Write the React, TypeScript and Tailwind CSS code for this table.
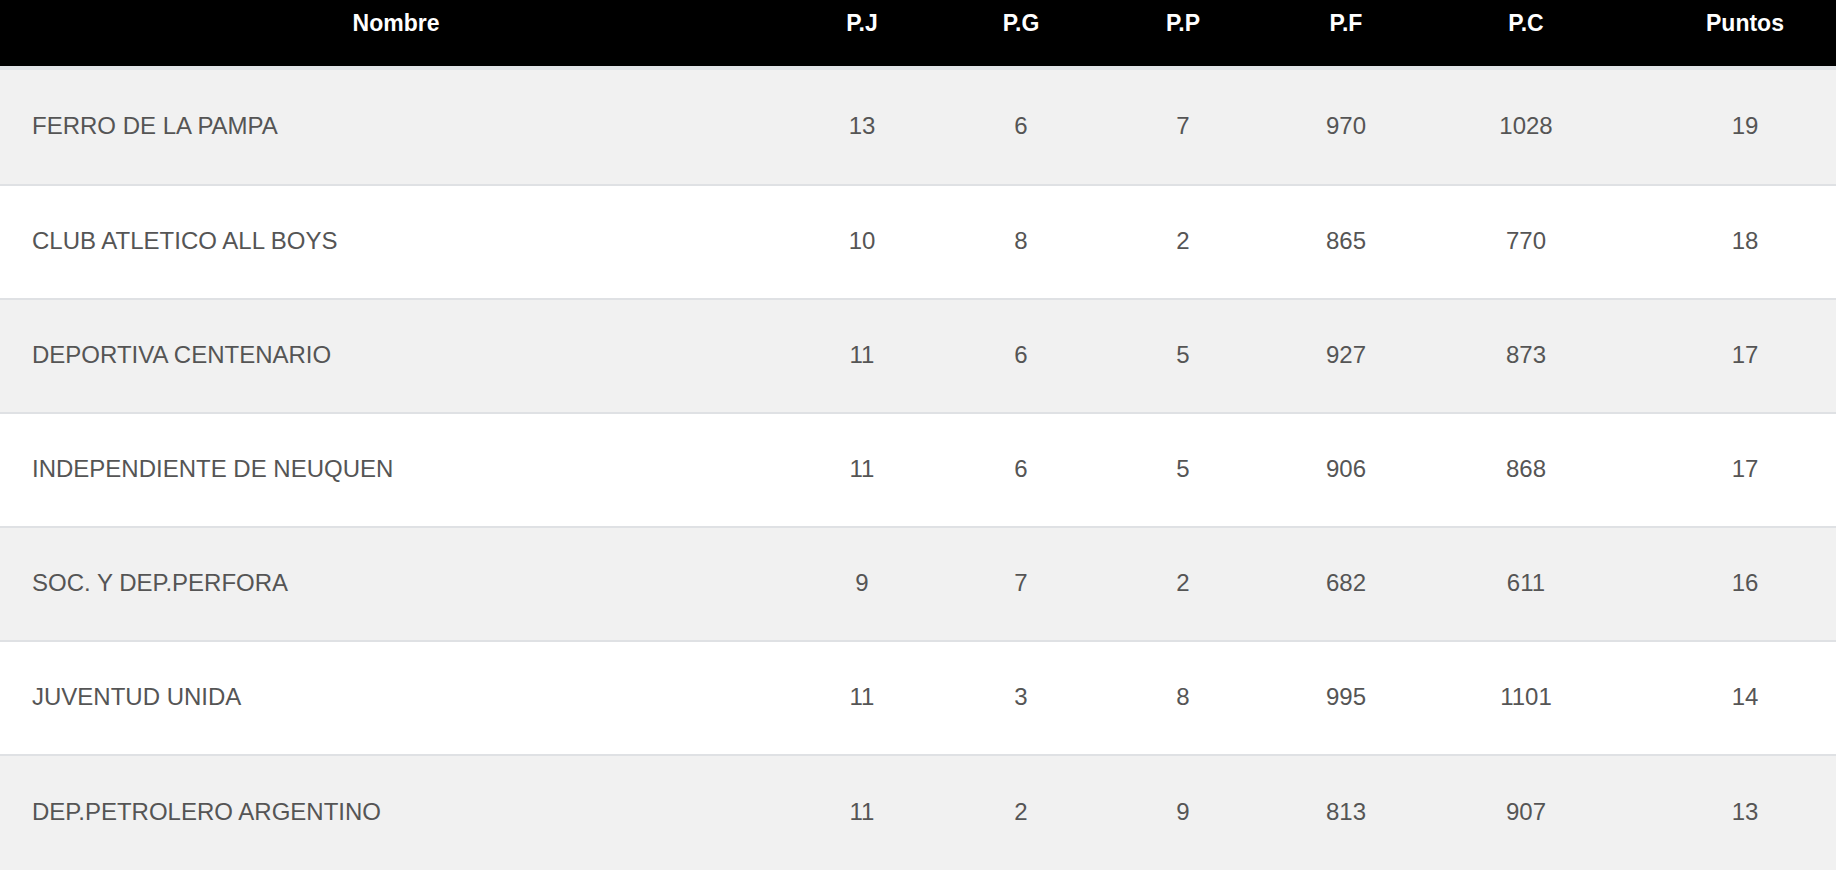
import React from "react";

type Team = {
  name: string;
  pj: number;
  pg: number;
  pp: number;
  pf: number;
  pc: number;
  puntos: number;
};

const teams: Team[] = [
  { name: "FERRO DE LA PAMPA", pj: 13, pg: 6, pp: 7, pf: 970, pc: 1028, puntos: 19 },
  { name: "CLUB ATLETICO ALL BOYS", pj: 10, pg: 8, pp: 2, pf: 865, pc: 770, puntos: 18 },
  { name: "DEPORTIVA CENTENARIO", pj: 11, pg: 6, pp: 5, pf: 927, pc: 873, puntos: 17 },
  { name: "INDEPENDIENTE DE NEUQUEN", pj: 11, pg: 6, pp: 5, pf: 906, pc: 868, puntos: 17 },
  { name: "SOC. Y DEP.PERFORA", pj: 9, pg: 7, pp: 2, pf: 682, pc: 611, puntos: 16 },
  { name: "JUVENTUD UNIDA", pj: 11, pg: 3, pp: 8, pf: 995, pc: 1101, puntos: 14 },
  { name: "DEP.PETROLERO ARGENTINO", pj: 11, pg: 2, pp: 9, pf: 813, pc: 907, puntos: 13 },
];

const cols = "grid grid-cols-[792px_140px_178px_146px_180px_180px_1fr]";

const App: React.FC = () => {
  return (
    <div className="w-full min-h-screen bg-white font-['Liberation_Sans',Arial,sans-serif]">
      {/* Cabecera */}
      <div className={`${cols} h-[70px] bg-black text-white font-bold text-[23px] leading-[26px] pt-[10px] border-b-4 border-[#e2e4e7]`}>
        <div className="text-center">Nombre</div>
        <div className="text-center">P.J</div>
        <div className="text-center">P.G</div>
        <div className="text-center">P.P</div>
        <div className="text-center">P.F</div>
        <div className="text-center">P.C</div>
        <div className="text-center pl-[38px]">Puntos</div>
      </div>

      {/* Filas */}
      {teams.map((t, i) => (
        <div
          key={t.name}
          className={`${cols} items-center pb-[3px] text-[24px] leading-[26px] text-[#555] ${
            i === teams.length - 1 ? "" : "border-b-2 border-[#dfe1e4]"
          } ${i === 0 ? "h-[116px]" : "h-[114px]"} ${i % 2 === 0 ? "bg-[#f1f1f1]" : "bg-white"}`}
        >
          <div className="pl-[32px]">{t.name}</div>
          <div className="text-center">{t.pj}</div>
          <div className="text-center">{t.pg}</div>
          <div className="text-center">{t.pp}</div>
          <div className="text-center">{t.pf}</div>
          <div className="text-center">{t.pc}</div>
          <div className="text-center pl-[38px]">{t.puntos}</div>
        </div>
      ))}
    </div>
  );
};

export default App;
